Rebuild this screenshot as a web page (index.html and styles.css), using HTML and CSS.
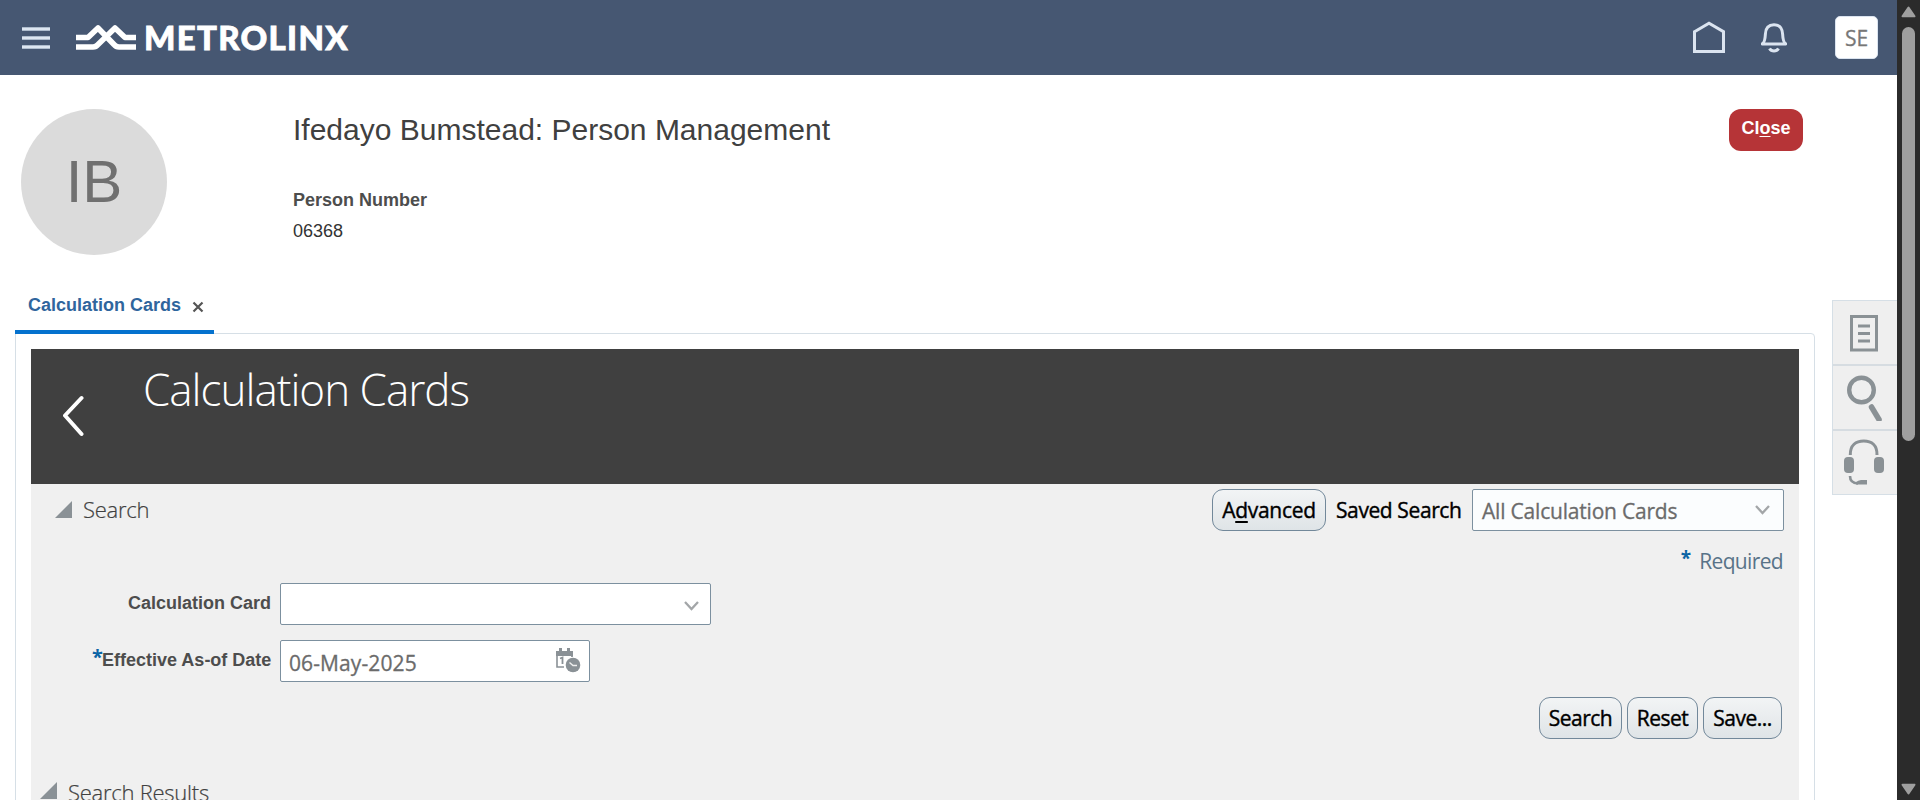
FILE: index.html
```html
<!DOCTYPE html>
<html lang="en">
<head>
<meta charset="utf-8">
<title>Person Management</title>
<link rel="stylesheet" href="styles.css">
</head>
<body>
<div class="window">
  <div class="page">
    <header class="topbar">
      <svg class="menu" width="28" height="22" viewBox="0 0 28 22"><path d="M0 2h28M0 11h28M0 20h28" stroke="#aebccd" stroke-width="4"/><path d="M0 2h28M0 11h28M0 20h28" stroke="#dde6f1" stroke-width="2"/></svg>
      <svg class="mark" width="60" height="26" viewBox="0 0 60 26" fill="none" stroke="#fff" stroke-width="5.600" stroke-linejoin="round"><path d="M0 12.500H12L22 3L38 19.500Q40 22 43 22H60"/><path d="M60 12.500H49L39 3L22 19.500Q20 22 17 22H0"/></svg>
      <span class="brand">METROLINX</span>
      <div class="tools">
        <svg class="home" width="32" height="33" viewBox="0 0 32 33" fill="none" stroke="#dbe4f0" stroke-width="3"><path d="M1.500 10.700L16 2.200L30.500 10.700V30.500H1.500Z"/></svg>
        <svg class="bell" width="26" height="30" viewBox="0 0 26 30" fill="none" stroke="#dbe4f0" stroke-width="3"><path d="M1.200 20.900Q4 19.500 4.400 11Q4.800 1.800 13 1.800T21.600 11Q22 19.500 24.800 20.900Z" stroke-width="3" stroke-linejoin="round"/><path d="M8.500 25.500Q10 28 13 28T17.500 25.500"/></svg>
        <span class="user">SE</span>
      </div>
    </header>
    <section class="person">
      <div class="avatar">IB</div>
      <div class="info">
        <h1>Ifedayo Bumstead: Person Management</h1>
        <div class="plabel">Person Number</div>
        <div class="pvalue">06368</div>
      </div>
      <button class="close">Cl<u>o</u>se</button>
    </section>
    <div class="content">
      <main class="work">
        <div class="tab"><span class="tabname">Calculation Cards</span><svg width="12" height="12" viewBox="0 0 12 12"><path d="M1.500 1.500L10.500 10.500M10.500 1.500L1.500 10.500" stroke="#555" stroke-width="2.200"/></svg></div>
        <div class="panel">
          <div class="banner">
            <svg class="back" width="22" height="42" viewBox="0 0 22 42" fill="none" stroke="#fff" stroke-width="4" stroke-linecap="round" stroke-linejoin="round"><path d="M18.500 3L2 20.500L18.500 39"/></svg>
            <h2>Calculation Cards</h2>
          </div>
          <div class="body">
            <div class="searchrow">
              <svg class="tri" width="18" height="18" viewBox="0 0 18 18"><path d="M0 17L17 0V17Z" fill="#8a9196"/></svg>
              <h3 class="stitle">Search</h3>
              <div class="saved">
                <button class="btn adv">A<u>d</u>vanced</button>
                <span class="savedlabel">Saved Search</span>
                <div class="box select"><span>All Calculation Cards</span><svg width="15" height="10" viewBox="0 0 15 10" fill="none" stroke="#a3a6a8" stroke-width="2.300"><path d="M1 1L7.500 8L14 1"/></svg></div>
              </div>
            </div>
            <div class="required"><span class="star">*</span><span class="reqtext">Required</span></div>
            <div class="field first"><span class="flabel l1">Calculation Card</span><div class="box combo"><svg width="15" height="10" viewBox="0 0 15 10" fill="none" stroke="#a3a6a8" stroke-width="2.300"><path d="M1 1L7.500 8L14 1"/></svg></div></div>
            <div class="field"><span class="fstar">*</span><span class="flabel l2">Effective As-of Date</span><div class="box date"><span>06-May-2025</span><svg width="25" height="25" viewBox="0 0 25 25"><path d="M0 3h17v5H0zM3 0h3v4H3zM11 0h3v4h-3z" fill="#8a9196"/><path d="M1 7V19H8" fill="none" stroke="#8a9196" stroke-width="1.600"/><path d="M16 7V9M4 10.500L6.500 9.500V16" fill="none" stroke="#8a9196" stroke-width="1.800"/><circle cx="17" cy="17" r="8" fill="#fff"/><circle cx="17" cy="17" r="7.300" fill="#8a9196"/><path d="M13.500 14.500L17 17.500H21" fill="none" stroke="#eee" stroke-width="1.500"/></svg></div></div>
            <div class="actions"><button class="btn b1">Search</button><button class="btn b2">Reset</button><button class="btn b3">Save...</button></div>
            <div class="results"><svg class="tri" width="18" height="18" viewBox="0 0 18 18"><path d="M0 17L17 0V17Z" fill="#8a9196"/></svg><h3 class="rtitle">Search Results</h3></div>
          </div>
        </div>
      </main>
      <aside class="side">
        <div class="cell"><svg width="40" height="50" viewBox="0 0 40 50" fill="none" stroke="#8a9195"><path d="M7.500 10.500H32.500V44H7.500Z" stroke-width="3"/><path d="M14 20H26M14 27.500H26M14 35H26" stroke-width="3"/></svg></div>
        <div class="cell"><svg width="40" height="50" viewBox="0 0 40 50" fill="none" stroke="#8a9195"><circle cx="17.500" cy="19" r="12.300" stroke-width="4.400"/><path d="M27.500 36L35 48.500" stroke-width="5.500" stroke-linecap="round"/></svg></div>
        <div class="cell"><svg width="40" height="50" viewBox="0 0 40 50" fill="none" stroke="#8a9195"><path d="M6.300 19C6 9 12 5 19.800 5S33.300 9 33 19" stroke-width="3"/><rect x="0" y="21" width="10" height="16" rx="4" fill="#8a9195" stroke="none"/><rect x="30" y="21" width="10" height="16" rx="4" fill="#8a9195" stroke="none"/><path d="M6 40Q6 47 14 47.500" stroke-width="2.600"/><path d="M12 48.500H23V44H17Q14 44.500 12 46Z" fill="#8a9195" stroke="none"/></svg></div>
      </aside>
    </div>
  </div>
  <div class="scroll">
    <svg width="15" height="12" viewBox="0 0 15 12"><path d="M7.500 1.500L13.500 10.300H1.500Z" fill="#9f9f9f" stroke="#9f9f9f" stroke-width="2" stroke-linejoin="round"/></svg>
    <div class="thumb"></div>
    <svg class="down" width="15" height="12" viewBox="0 0 15 12"><path d="M7.500 10.500L13.500 1.700H1.500Z" fill="#9f9f9f" stroke="#9f9f9f" stroke-width="2" stroke-linejoin="round"/></svg>
  </div>
</div>
</body>
</html>
```
FILE: styles.css
```css
* { box-sizing: border-box; }
body { margin: 0; background: #fff; font-family: "Liberation Sans", sans-serif; overflow: hidden; }
h1, h2, h3 { margin: 0; }
svg { display: block; flex: none; }
button { font: inherit; padding: 0; margin: 0; }
.window { display: flex; width: 1920px; height: 800px; overflow: hidden; }
.page { width: 1897px; height: 800px; overflow: hidden; }
.scroll { width: 23px; background: #2b2b2b; display: flex; flex-direction: column; align-items: center; padding: 6px 0 5px; }
.thumb { width: 13px; height: 414px; margin-top: 9px; border-radius: 7px; background: #9f9f9f; }
.down { margin-top: auto; }

.topbar { height: 75px; background: #465772; display: flex; align-items: flex-start; padding-left: 22px; }
.menu { margin-top: 27px; }
.mark { margin: 25px 0 0 26px; }
.brand { margin: 17px 0 0 8px; font: 900 33px/40px Lato, sans-serif; letter-spacing: 1.3px; -webkit-text-stroke: 0.8px #fff; color: #fff; }
.tools { margin-left: auto; display: flex; align-items: flex-start; padding-right: 19px; }
.home { margin: 21px 36px 0 0; }
.bell { margin: 23px 48px 0 0; }
.user { width: 43px; height: 43px; margin-top: 16px; border-radius: 5px; background: #fff; color: #777; font: 21px/42px "Open Sans", sans-serif; text-align: center; border: 1px solid #dbe4f0; -webkit-text-stroke: 0.3px #777; }

.person { height: 215px; display: flex; align-items: flex-start; padding: 34px 94px 0 21px; }
.avatar { width: 146px; height: 146px; border-radius: 50%; background: #dbdbdb; color: #707070; font-size: 60px; line-height: 146px; text-align: center; }
.info { margin-left: 126px; }
h1 { font-weight: 400; font-size: 30px; line-height: 41px; color: #404040; }
.plabel { margin-top: 38px; font-weight: 700; font-size: 18px; line-height: 24px; color: #4d4d4d; }
.pvalue { margin-top: 7px; font-size: 18px; line-height: 24px; color: #333; }
.close { margin-left: auto; width: 74px; height: 42px; border: 0; border-radius: 12px; background: #b63437; color: #fff; font-weight: 700; font-size: 18px; line-height: 38px; padding-bottom: 4px; }

.content { display: flex; align-items: flex-start; padding-left: 15px; }
.work { width: 1800px; }
.tab { position: relative; width: 199px; height: 44px; margin-bottom: -1px; border-bottom: 4px solid #0572ce; display: flex; align-items: center; padding: 0 0 9px 13px; color: #2f659d; font-weight: 700; font-size: 18px; }
.tabname { width: 164px; }
.tab svg { margin-top: 2px; }
.panel { height: 560px; border: 1px solid #d6dfe6; border-radius: 0 4px 0 0; padding: 15px 15px 0; }
.banner { height: 135px; background: #404040; color: #fff; display: flex; align-items: flex-start; padding-left: 32px; }
.back { margin-top: 46px; }
h2 { margin: 10px 0 0 58px; font: 300 44px/60px "Open Sans", sans-serif; letter-spacing: -1px; }
.body { height: 400px; background: #f0f0f0; font-family: "Open Sans", sans-serif; font-size: 21px; }
h3 { font: 300 22px/30px "Open Sans", sans-serif; letter-spacing: -0.25px; color: #404040; -webkit-text-stroke: 0.2px #404040; }
.searchrow { height: 47px; display: flex; align-items: flex-start; padding: 5px 15px 0 24px; }
.searchrow .tri { margin-top: 12px; }
.stitle { margin: 5px 0 0 10px; }
.saved { margin-left: auto; display: flex; align-items: flex-start; }
.btn { height: 42px; border: 1px solid #72889a; border-radius: 11px; background: linear-gradient(#f2f4f5, #dfe4e7); color: #000; font-family: "Open Sans", sans-serif; font-weight: 500; font-size: 21px; line-height: 40px; letter-spacing: -0.5px; -webkit-text-stroke: 0.4px #000; white-space: nowrap; }
.btn u, .close u { text-underline-offset: 3px; text-decoration-thickness: 2px; text-decoration-skip-ink: none; }
.close u { text-decoration-thickness: 1px; text-underline-offset: 2px; }
.adv { width: 114px; letter-spacing: -0.3px; }
.savedlabel { width: 146px; padding-left: 10px; line-height: 43px; font-weight: 500; letter-spacing: -0.4px; -webkit-text-stroke: 0.4px #000; color: #000; white-space: nowrap; }
.box { height: 42px; border: 1px solid #7c909f; border-radius: 2px; background: #fff; color: #6b6b6b; -webkit-text-stroke: 0.3px #6b6b6b; display: flex; align-items: center; justify-content: space-between; white-space: nowrap; }
.select { width: 312px; background: #fbfdfe; padding: 0 13px 0 9px; letter-spacing: -0.2px; }
.select span { padding-top: 2px; }
.required { height: 52px; display: flex; justify-content: flex-end; padding: 15px 16px 0 0; line-height: 30px; color: #587388; }
.reqtext { letter-spacing: -0.65px; }
.star { margin-right: 8px; font-weight: 700; color: #0b64a5; font-size: 19px; line-height: 24px; }
.field { display: flex; height: 57px; padding-left: 61px; }
.flabel { font: 700 18px/40px "Liberation Sans", sans-serif; color: #4d4d4d; white-space: nowrap; }
.l1 { margin-left: 36px; width: 152px; }
.l2 { width: 178px; }
.fstar { width: 10px; font-weight: 700; font-size: 20px; line-height: 33px; color: #0b64a5; }
.combo { width: 431px; justify-content: flex-end; padding: 3px 11px 0 0; }
.date { width: 310px; padding: 0 8px 0 8px; letter-spacing: 0.1px; }
.date span { padding-top: 3px; }
.date svg { margin-top: -1px; }
.actions { display: flex; justify-content: flex-end; gap: 5px; padding-right: 17px; }
.b1 { width: 83px; } .b2 { width: 71px; } .b3 { width: 79px; }
.results { display: flex; padding: 43px 0 0 9px; }
.rtitle { margin: -5px 0 0 10px; }

.side { width: 65px; margin: 10px 0 0 17px; border: 1px solid #d6dfe6; border-right: 0; background: #efefef; }
.cell { height: 65px; padding: 5px 0 0 11px; border-bottom: 2px solid #d6dce1; }
.cell:last-child { height: 63px; border-bottom: 0; }
```
